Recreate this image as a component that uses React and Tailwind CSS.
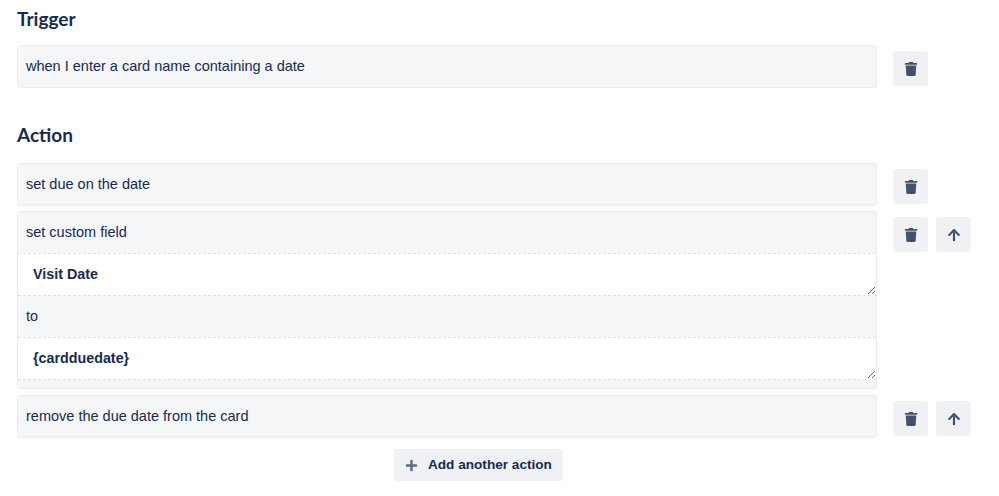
import { FaTrash, FaArrowUp, FaPlus } from 'react-icons/fa'

function IconButton({ children }) {
  return (
    <button type="button" className="flex h-[35px] w-[35px] items-center justify-center rounded-[3px] bg-[#f0f1f4] text-[#42526e]">
      {children}
    </button>
  )
}

function Buttons({ up }) {
  return (
    <div className="mt-[6px] ml-4 flex gap-2">
      <IconButton><FaTrash className="h-[14px] w-[14px]" /></IconButton>
      {up ? <IconButton><FaArrowUp className="h-[14px] w-[14px]" /></IconButton> : null}
    </div>
  )
}

function Line({ children }) {
  return <div className="flex h-[41px] items-center px-2 text-[14.5px] text-[#172b4d]">{children}</div>
}

function Card({ children }) {
  return (
    <div className="w-[860px] rounded-[3px] border border-[#ebecf0] bg-[#f5f6f8]">
      {children}
    </div>
  )
}

function Field({ value }) {
  return (
    <textarea
      readOnly
      defaultValue={value}
      className="block h-[43px] w-full border-y border-dashed border-[#dfe1e6] bg-white px-[15px] py-[12px] text-[14.3px] leading-[17px] font-bold text-[#172b4d] outline-none"
    />
  )
}

export default function App() {
  return (
    <div className="h-[496px] w-[999px] overflow-hidden bg-white pt-[7px] pl-[17px] font-['Liberation_Sans',Arial,sans-serif]">
      <h2 className="h-[24px] font-['Lato',sans-serif] text-[19px] leading-[24px] font-bold text-[#172b4d]">Trigger</h2>
      <div className="mt-[14px] flex">
        <Card><Line>when I enter a card name containing a date</Line></Card>
        <Buttons />
      </div>

      <h2 className="mt-[35px] h-[24px] font-['Lato',sans-serif] text-[19px] leading-[24px] font-bold text-[#172b4d]">Action</h2>
      <div className="mt-[16px] flex">
        <Card><Line>set due on the date</Line></Card>
        <Buttons />
      </div>
      <div className="mt-[5px] flex">
        <Card>
          <Line>set custom field</Line>
          <Field value="Visit Date" />
          <Line>to</Line>
          <Field value="{cardduedate}" />
          <div className="h-[8px]" />
        </Card>
        <Buttons up />
      </div>
      <div className="mt-[6px] flex">
        <Card><Line>remove the due date from the card</Line></Card>
        <Buttons up />
      </div>
      <div className="mt-[11px] flex w-[923px] justify-center">
        <button type="button" className="flex h-[32px] w-[169px] items-center rounded-[3px] bg-[#f0f1f4] pl-[11px] text-[13.6px] font-bold text-[#172b4d]">
          <FaPlus className="mr-[10px] h-[13px] w-[13px] text-[#5e6c84]" />
          <span>Add another action</span>
        </button>
      </div>
    </div>
  )
}
